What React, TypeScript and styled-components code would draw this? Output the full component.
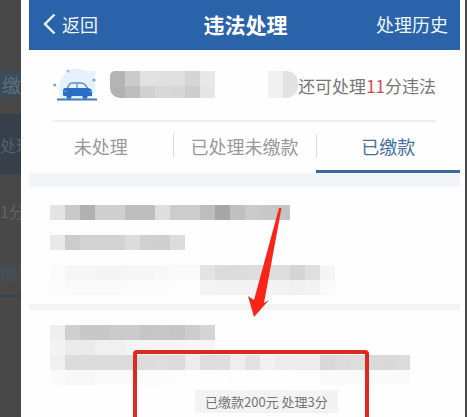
import React from "react";
import styled, { createGlobalStyle } from "styled-components";

const GlobalStyle = createGlobalStyle`
  * { box-sizing: border-box; }
  body { margin: 0; background: #484848; overflow: hidden; }
  button { border: 0; padding: 0; background: none; font: inherit; color: inherit; cursor: pointer; }
`;

const Page = styled.div`
  display: flex;
  height: 100vh;
  overflow: hidden;
  background: #484848;
  font-family: "Noto Sans CJK SC", "Noto Sans", sans-serif;
`;

const Backdrop = styled.aside`
  width: 21px;
  flex: none;
  overflow: hidden;
  white-space: nowrap;
`;

const BackdropBand = styled.div<{ $height: number; $bg?: string; $color?: string; $size?: number; $line?: boolean; $indent?: number }>`
  display: flex;
  align-items: center;
  height: ${(p) => p.$height}px;
  padding-left: ${(p) => p.$indent ?? 0}px;
  background: ${(p) => p.$bg ?? "#484848"};
  color: ${(p) => p.$color ?? "#626262"};
  font-size: ${(p) => p.$size ?? 18}px;
  border-bottom: ${(p) => (p.$line ? "2px solid #34424e" : "0")};
`;

const Screen = styled.main`
  flex: 1;
  min-width: 0;
  margin-right: 2px;
  padding: 0 5px 0 8px;
  background: #fefefe;
`;

const Header = styled.header`
  display: grid;
  grid-template-columns: 1fr auto 1fr;
  align-items: center;
  height: 50px;
  padding: 0 12px 2px 14px;
  background: #2b63aa;
  color: #eef6fc;
  font-size: 18px;
  line-height: 24px;
`;

const BackButton = styled.button`
  display: flex;
  align-items: center;
  gap: 6px;
  justify-self: start;
`;

const Title = styled.h1`
  margin: 0;
  font-size: 21px;
  font-weight: 700;
  color: #fff;
`;

const HistoryButton = styled.button`
  justify-self: end;
`;

const Vehicle = styled.section`
  display: flex;
  align-items: center;
  height: 72px;
  margin: 0 24px;
  padding-bottom: 2px;
  border-bottom: 2px solid #eeeeee;
`;

const CarIcon = styled.svg`
  flex: none;
  width: 48px;
  height: 40px;
  margin-right: 9px;
`;

const Quota = styled.p`
  flex: none;
  margin: 4px 0 0;
  font-size: 17px;
  line-height: 24px;
  color: #777;
`;

const Points = styled.span`
  color: #cf4d55;
`;

const Mosaic = styled.div<{ $radius?: string; $push?: boolean }>`
  flex: none;
  overflow: hidden;
  border-radius: ${(p) => p.$radius ?? "0"};
  margin-left: ${(p) => (p.$push ? "auto" : "0")};
`;

const MosaicRow = styled.div<{ $height: number }>`
  display: flex;
  height: ${(p) => p.$height}px;
`;

const Tile = styled.span<{ $shade: string }>`
  flex: none;
  width: 15px;
  background: ${(p) => (p.$shade === "--" ? "transparent" : `#${p.$shade.repeat(3)}`)};
`;

const Tabs = styled.nav`
  display: grid;
  grid-template-columns: repeat(3, 1fr);
  height: 51px;
  font-size: 18px;
`;

const Tab = styled.button<{ $active?: boolean; $divided?: boolean }>`
  position: relative;
  display: flex;
  align-items: center;
  justify-content: center;
  line-height: 24px;
  color: ${(p) => (p.$active ? "#45719c" : "#999")};
  border-bottom: 3px solid ${(p) => (p.$active ? "#3b6998" : "transparent")};

  &::before {
    content: "";
    display: ${(p) => (p.$divided ? "block" : "none")};
    position: absolute;
    left: 0;
    top: 12px;
    width: 1px;
    height: 24px;
    background: #ddd;
  }
`;

const Band = styled.div<{ $height: number }>`
  height: ${(p) => p.$height}px;
  background: #f3f4f7;
`;

const Record = styled.section<{ $top: number; $bottom: number }>`
  position: relative;
  padding: ${(p) => p.$top}px 21px ${(p) => p.$bottom}px;
`;

const Status = styled.div`
  width: max-content;
  margin: 5px 0 0 145px;
  padding: 0 10px;
  background: #f3f3f3;
  color: #757575;
  font-size: 13px;
  line-height: 23px;
`;

const Highlight = styled.div`
  position: absolute;
  top: 40px;
  left: 104px;
  width: 236px;
  height: 110px;
  border: 4px solid #de2923;
  border-radius: 4px;
`;

const Arrow = styled.svg`
  position: absolute;
  top: 19px;
  left: 218px;
  width: 38px;
  height: 114px;
  z-index: 1;
`;

function Tiles({ height, shades }: { height: number; shades: string }) {
  return (
    <MosaicRow $height={height}>
      {shades.split(" ").map((shade, i) => (
        <Tile key={i} $shade={shade} />
      ))}
    </MosaicRow>
  );
}

export default function App() {
  return (
    <Page>
      <GlobalStyle />
      <Backdrop aria-hidden="true">
        <BackdropBand $height={71} />
        <BackdropBand $height={26} $bg="#3c4b58" $color="#60707c" $size={19} $indent={2}>缴</BackdropBand>
        <BackdropBand $height={17} />
        <BackdropBand $height={61} $bg="#373f4b" $color="#56606b" $size={16}>处理</BackdropBand>
        <BackdropBand $height={72} $size={16}>1分</BackdropBand>
        <BackdropBand $height={50} $color="#46535e" $size={17} $line>缴款</BackdropBand>
      </Backdrop>

      <Screen>
        <Header>
          <BackButton type="button">
            <svg width="13" height="22" viewBox="0 0 13 22" fill="none" stroke="currentColor" strokeWidth="2.4" aria-hidden="true">
              <path d="M11.5 1.5 2 11l9.500 9.500" />
            </svg>
            返回
          </BackButton>
          <Title>违法处理</Title>
          <HistoryButton type="button">处理历史</HistoryButton>
        </Header>

        <Vehicle>
          <CarIcon viewBox="0 0 48 40" aria-hidden="true">
            <path d="M8 35C3 22 8 7 21 5c6-1 8 2 14 2 5 0 9-1 8 3-2 3-3 5-1 10 1 6-1 11-3 15Z" fill="#e5f1fc" />
            <circle cx="15" cy="7" r="1.600" fill="#a5c5df" />
            <circle cx="1.800" cy="21" r="1.600" fill="#78a9d2" />
            <circle cx="41" cy="16" r="1.600" fill="#78a9d2" />
            <path d="M14 25c2-5 3-6 5-6h9c3 0 5 2 7 6" fill="#e8f3fc" stroke="#5b8fc8" strokeWidth="1.300" />
            <path d="M24 19v6" stroke="#5b8fc8" strokeWidth="1.200" />
            <path d="M12 24h23c3 .5 4 2 4 4v4H11c-1 0-1-1-1-2v-3c0-2 1-3 2-3Z" fill="#286fc2" />
            <path d="M11 27.500h3M36 27.500h3" stroke="#6aa0df" />
            <circle cx="16" cy="32.500" r="2.500" fill="#286fc2" />
            <circle cx="32" cy="32.500" r="2.500" fill="#286fc2" />
            <path d="M4 35.500h40" stroke="#3d7dc4" strokeWidth="2" />
          </CarIcon>
          <Mosaic $radius="5px 0 0 10px">
            <Tiles height={15} shades="b4 cb e1 e0 df d5 e8" />
            <Tiles height={12} shades="b2 be d1 d8 d7 cd e5" />
          </Mosaic>
          <Mosaic $radius="0 12px 12px 0" $push>
            <Tiles height={27} shades="f1 e2" />
          </Mosaic>
          <Quota>还可处理<Points>11</Points>分违法</Quota>
        </Vehicle>

        <Tabs>
          <Tab type="button">未处理</Tab>
          <Tab type="button" $divided>已处理未缴款</Tab>
          <Tab type="button" $divided $active>已缴款</Tab>
        </Tabs>
        <Band $height={14} />

        <Record $top={18} $bottom={9}>
          <Mosaic>
            <Tiles height={15} shades="e4 c9 b1 cf cf be be de cc cc bd a6 c0 cb c8 c4" />
            <Tiles height={15} shades="--" />
            <Tiles height={15} shades="e9 cc d2 d2 d2 dc d0 cf dc" />
            <Tiles height={15} shades="--" />
            <Tiles height={15} shades="fb f6 f6 f5 f5 f6 f6 f8 fa fa e4 db dc dd de de d5 df f5" />
            <Tiles height={15} shades="fc fa fa fa fa fb fb fc fd fd f4 f2 f2 f3 f3 f3 f1 f3 fa" />
          </Mosaic>
          <Arrow viewBox="0 0 38 114" aria-hidden="true">
            <path d="M32 2h2.500L17 97l5-3L7 111 1 90l6 4Z" fill="#fb2418" />
          </Arrow>
        </Record>
        <Band $height={6} />

        <Record $top={15} $bottom={12}>
          <Mosaic $radius="0 0 0 10px">
            <Tiles height={15} shades="ef cf c8 c8 cb cb c6 c7 c5 cd d5" />
            <Tiles height={15} shades="f3 eb ea f0 f0 f4 f4 f5 f5 f6 f6" />
            <Tiles height={15} shades="f0 dc dc dc dc db dc dd db ec dd de ee e2 f1 ec ed ed d8 dc de da d9 db" />
            <Tiles height={15} shades="fa f8 f8 fa fa fa fb fc fd fe fe fe fd fe fe fe fd fd fa fa fa fa fa fa" />
          </Mosaic>
          <Status>已缴款200元 处理3分</Status>
          <Highlight />
        </Record>
      </Screen>
    </Page>
  );
}
